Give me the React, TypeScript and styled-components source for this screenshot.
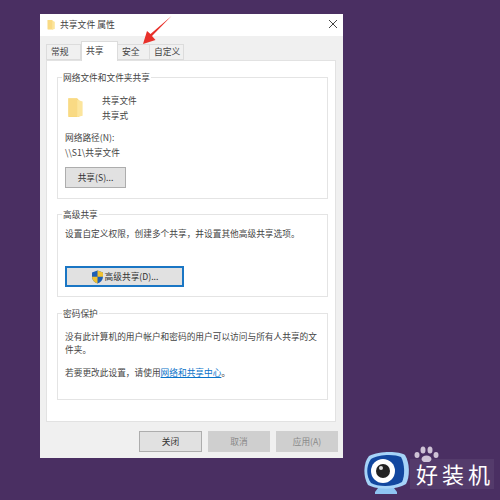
import React from 'react';
import styled, { createGlobalStyle } from 'styled-components';

const GlobalStyle = createGlobalStyle`
  html, body {
    margin: 0;
    padding: 0;
    background: #4a2f62;
  }
  * {
    box-sizing: border-box;
  }
`;

const Page = styled.div`
  position: relative;
  width: 500px;
  height: 500px;
  overflow: hidden;
  padding: 14px 0 0 40px;
  background: #4a2f62;
  font-family: "Noto Sans CJK SC", "Liberation Sans", sans-serif;
  font-size: 8.7px;
  color: #444;
`;

const Dialog = styled.div`
  width: 303px;
  height: 444px;
  background: #f0f0f0;
  display: flex;
  flex-direction: column;
`;

const TitleBar = styled.div`
  height: 22px;
  padding: 0 5px 2px 6px;
  background: #fff;
  display: flex;
  align-items: center;
  gap: 3px;
  font-size: 8.8px;
  color: #444;
`;

const TitleText = styled.span`
  flex: 1;
`;

const Tabs = styled.div`
  height: 24px;
  padding-left: 6px;
  display: flex;
  align-items: flex-end;
`;

const Tab = styled.div<{ $active?: boolean; $width: number }>`
  position: relative;
  width: ${p => p.$width}px;
  height: ${p => (p.$active ? 20 : 16)}px;
  margin-bottom: ${p => (p.$active ? -1 : 0)}px;
  margin-left: ${p => (p.$active ? 0 : -1)}px;
  padding: 0 0 2px 4px;
  background: ${p => (p.$active ? '#fff' : '#f0f0f0')};
  border: 1px solid #dcdcdc;
  border-bottom: ${p => (p.$active ? 'none' : '1px solid #dcdcdc')};
  display: flex;
  align-items: center;
  font-size: 8.8px;
  color: #444;

  &:first-child {
    margin-left: 0;
  }
`;

const TabPanel = styled.div`
  width: 290px;
  height: 362px;
  margin-left: 6px;
  background: #fff;
  border: 1px solid #e2e2e2;
  padding: 16px 7px 0 10px;
  display: flex;
  flex-direction: column;
`;

const Group = styled.div<{ $height: number; $gap: number }>`
  position: relative;
  height: ${p => p.$height}px;
  margin-bottom: ${p => p.$gap}px;
  padding: 0 10px 0 7px;
  border: 1px solid #e4e4e4;
`;

const Legend = styled.div`
  position: absolute;
  top: -7px;
  left: 4px;
  padding: 0 1px;
  background: #fff;
  line-height: 13px;
  color: #444;
`;

const FileRow = styled.div`
  padding-top: 18px;
  display: flex;
  gap: 15px;
`;

const FileLines = styled.div`
  margin-top: -2px;
  display: flex;
  flex-direction: column;
  gap: 2px;
  line-height: 13px;
`;

const TextLine = styled.div<{ $top?: number }>`
  margin-top: ${p => p.$top ?? 0}px;
  line-height: 14px;
  color: #444;
  white-space: nowrap;
`;

const Button = styled.div<{ $width: number; $focused?: boolean; $disabled?: boolean }>`
  width: ${p => p.$width}px;
  height: 21px;
  background: ${p => (p.$disabled ? '#cfcfcf' : '#e1e1e1')};
  border: ${p => (p.$focused ? '2px solid #1a76c4' : p.$disabled ? '1px solid #cfcfcf' : '1px solid #adadad')};
  color: ${p => (p.$disabled ? '#8a8a8a' : '#333')};
  display: flex;
  align-items: center;
  justify-content: center;
  gap: 1px;
`;

const ButtonSlot = styled.div<{ $top: number }>`
  margin-top: ${p => p.$top}px;
`;

const LinkText = styled.span`
  color: #0a73c9;
  text-decoration: underline;
`;

const Footer = styled.div`
  flex: 1;
  padding: 9px 5px 0 0;
  display: flex;
  justify-content: flex-end;
  gap: 6px;
`;

const Arrow = styled.svg`
  position: absolute;
  left: 140px;
  top: 14px;
`;

const Logo = styled.div`
  position: absolute;
  left: 363px;
  top: 446px;
  width: 137px;
  height: 54px;
`;

const Paw = styled.svg`
  position: absolute;
  left: 50px;
  top: 0;
`;

const LogoText = styled.div`
  position: absolute;
  left: 47px;
  top: 13px;
  width: 84px;
  height: 30px;
  padding-left: 6px;
  background: rgba(255, 255, 255, 0.06);
  color: #fff;
  font-size: 22px;
  line-height: 28px;
  letter-spacing: 4px;
  white-space: nowrap;
`;

const LogoIcon = styled.svg`
  position: absolute;
  left: 0;
  top: 4px;
`;

const FolderIcon: React.FC<{ size: number }> = ({ size }) => (
  <svg width={size} height={size} viewBox="0 0 20 20">
    <path d="M3 2h8l2 2v15H3z" fill="#f8d87c" />
    <path d="M11 3.5l5 1.5v13l-5 1z" fill="#fce59c" />
    <path d="M3 2h8v16H3z" fill="#f9dc88" opacity="0.7" />
  </svg>
);

const ShieldIcon: React.FC = () => (
  <svg width="13" height="14" viewBox="0 0 13 14">
    <path d="M6.5 0.5 12 2.5v4.2c0 3.2-2.4 5.6-5.5 6.8C3.4 12.300 1 9.900 1 6.700V2.500z" fill="#1f5fb4" />
    <path d="M6.500 0.500 12 2.500v4.200H6.500z" fill="#f2c230" />
    <path d="M6.500 6.700H1c0 3.200 2.400 5.600 5.500 6.800z" fill="#f2c230" />
  </svg>
);

const App: React.FC = () => (
  <Page>
    <GlobalStyle />
    <Dialog>
      <TitleBar>
        <FolderIcon size={11} />
        <TitleText>共享文件 属性</TitleText>
        <svg width="10" height="10" viewBox="0 0 10 10">
          <path d="M1 1l8 8M9 1l-8 8" stroke="#444" strokeWidth="1" fill="none" />
        </svg>
      </TitleBar>
      <Tabs>
        <Tab $width={35}>常规</Tab>
        <Tab $width={37} $active>共享</Tab>
        <Tab $width={33}>安全</Tab>
        <Tab $width={35}>自定义</Tab>
      </Tabs>
      <TabPanel>
        <Group $height={122} $gap={15}>
          <Legend>网络文件和文件夹共享</Legend>
          <FileRow>
            <FolderIcon size={22} />
            <FileLines>
              <div>共享文件</div>
              <div>共享式</div>
            </FileLines>
          </FileRow>
          <TextLine $top={9}>网络路径(N):</TextLine>
          <TextLine $top={1}>\\S1\共享文件</TextLine>
          <ButtonSlot $top={7}>
            <Button $width={61}>共享(S)...</Button>
          </ButtonSlot>
        </Group>
        <Group $height={83} $gap={16}>
          <Legend>高级共享</Legend>
          <TextLine $top={12}>设置自定义权限，创建多个共享，并设置其他高级共享选项。</TextLine>
          <ButtonSlot $top={25}>
            <Button $width={119} $focused>
              <ShieldIcon />
              高级共享(D)...
            </Button>
          </ButtonSlot>
        </Group>
        <Group $height={87} $gap={0}>
          <Legend>密码保护</Legend>
          <TextLine $top={16}>没有此计算机的用户帐户和密码的用户可以访问与所有人共享的文</TextLine>
          <TextLine $top={-1}>件夹。</TextLine>
          <TextLine $top={9}>
            若要更改此设置，请使用<LinkText>网络和共享中心</LinkText>。
          </TextLine>
        </Group>
      </TabPanel>
      <Footer>
        <Button $width={63}>关闭</Button>
        <Button $width={62} $disabled>取消</Button>
        <Button $width={62} $disabled>应用(A)</Button>
      </Footer>
    </Dialog>
    <Arrow width="36" height="32" viewBox="0 0 36 32">
      <path d="M31.500 2 L12 22 L15.500 26 L3 30 L7 17 L10.500 20 Z" fill="#e8302a" />
    </Arrow>
    <Logo>
      <Paw width="30" height="16" viewBox="0 0 30 16">
        <g fill="#cfc3d6">
          <ellipse cx="4" cy="9" rx="2.500" ry="3" />
          <ellipse cx="10" cy="4" rx="2.500" ry="3.500" />
          <ellipse cx="17" cy="4" rx="2.500" ry="3.500" />
          <ellipse cx="23" cy="9" rx="2.500" ry="3" />
          <ellipse cx="13.500" cy="13" rx="5" ry="3.500" />
        </g>
      </Paw>
      <LogoIcon width="48" height="46" viewBox="0 0 48 46">
        <path d="M15 38h16l3 4v2H12v-2z" fill="#8fc4f2" />
        <path d="M6 6 C16 1 36 1 42 5 C47 13 47 27 43 34 C34 40 14 40 5 35 C0 27 0 13 6 6Z" fill="#a6d3f8" />
        <path d="M8 9 C16 4 32 4 38 7 C42 14 42 26 39 32 C31 37 15 37 8 33 C3 26 3 16 8 9Z" fill="#12479f" />
        <circle cx="20" cy="21" r="12" fill="#fff" />
        <circle cx="20" cy="21" r="7" fill="#222" />
        <circle cx="18" cy="18" r="2" fill="#ddd" />
      </LogoIcon>
      <LogoText>好装机</LogoText>
    </Logo>
  </Page>
);

export default App;
